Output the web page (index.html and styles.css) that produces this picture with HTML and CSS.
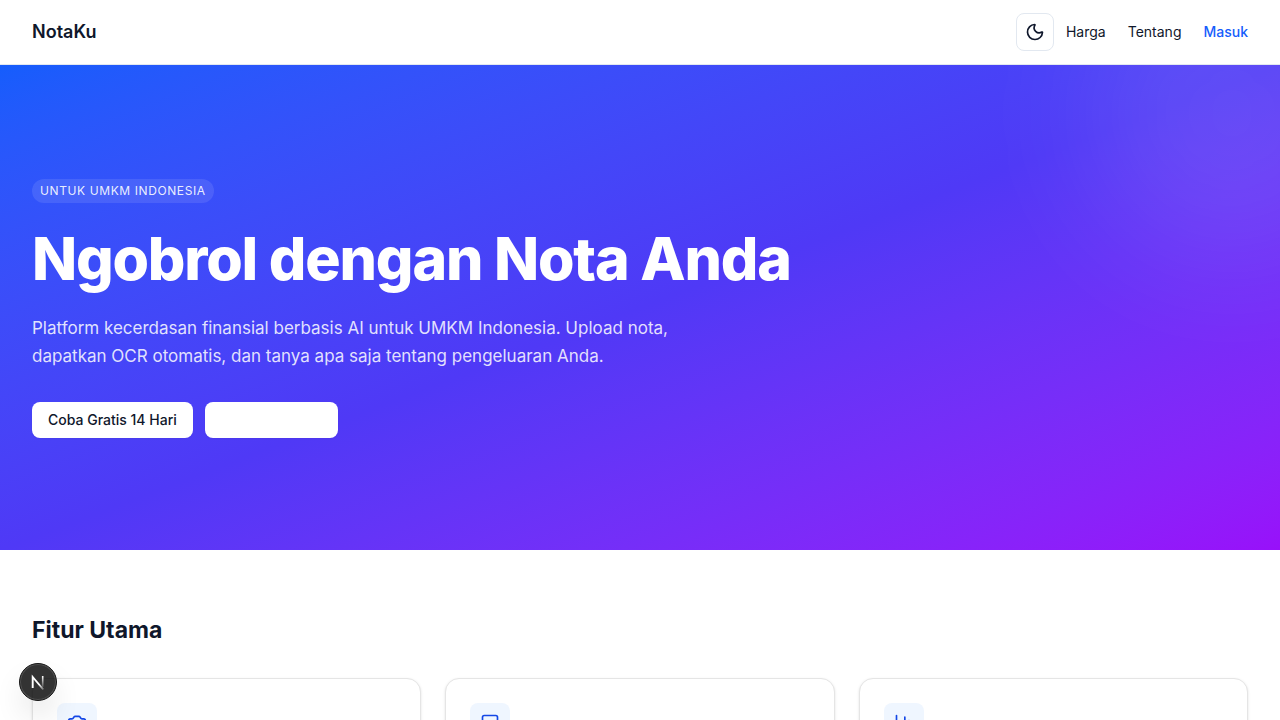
FILE: index.html
```html
<!DOCTYPE html>
<html lang="id">
<head>
  <meta charset="utf-8">
  <meta name="viewport" content="width=device-width, initial-scale=1">
  <title>NotaKu</title>
  <link rel="stylesheet" href="styles.css">
</head>
<body>
  <header class="site-header">
    <a class="brand" href="#">NotaKu</a>
    <div class="header-actions">
      <button class="theme-toggle" type="button" aria-label="Ganti tema">
        <svg class="icon" viewBox="0 0 24 24" aria-hidden="true"><path d="M20.985 12.486a9 9 0 1 1-9.473-9.472c.405-.022.617.46.402.803a6 6 0 0 0 8.268 8.268c.344-.215.825-.004.803.401"/></svg>
      </button>
      <nav class="site-nav">
        <a href="#">Harga</a>
        <a href="#">Tentang</a>
        <a class="login" href="#">Masuk</a>
      </nav>
    </div>
  </header>

  <main>
    <section class="hero">
      <div class="hero-glow"></div>
      <span class="badge">Untuk UMKM Indonesia</span>
      <h1>Ngobrol dengan Nota Anda</h1>
      <p class="lead">Platform kecerdasan finansial berbasis AI untuk UMKM Indonesia. Upload nota, dapatkan OCR otomatis, dan tanya apa saja tentang pengeluaran Anda.</p>
      <div class="hero-actions">
        <a class="button" href="#">Coba Gratis 14 Hari</a>
        <a class="button button-blank" href="#" aria-label="Harga"></a>
      </div>
    </section>

    <section class="features">
      <h2>Fitur Utama</h2>
      <div class="cards">
        <article class="card">
          <div class="card-icon">
            <svg class="icon" viewBox="0 0 24 24" aria-hidden="true"><path d="M13.997 4a2 2 0 0 1 1.760 1.050l.486.900A2 2 0 0 0 18.003 7H20a2 2 0 0 1 2 2v9a2 2 0 0 1-2 2H4a2 2 0 0 1-2-2V9a2 2 0 0 1 2-2h1.997a2 2 0 0 0 1.759-1.048l.489-.904A2 2 0 0 1 10.004 4z"/><circle cx="12" cy="13" r="3"/></svg>
          </div>
        </article>
        <article class="card">
          <div class="card-icon">
            <svg class="icon" viewBox="0 0 24 24" aria-hidden="true"><path d="M21 15a2 2 0 0 1-2 2H7l-4 4V5a2 2 0 0 1 2-2h14a2 2 0 0 1 2 2z"/></svg>
          </div>
        </article>
        <article class="card">
          <div class="card-icon">
            <svg class="icon" viewBox="0 0 24 24" aria-hidden="true"><path d="M3 3v16a2 2 0 0 0 2 2h16M18 17V9M13 17V5M8 17v-3"/></svg>
          </div>
        </article>
      </div>
    </section>
  </main>

  <button class="dev-badge" type="button" aria-label="Next.js">
    <svg viewBox="0 0 36 36" aria-hidden="true">
      <defs>
        <linearGradient id="stem" x1="0" y1="12" x2="0" y2="25" gradientUnits="userSpaceOnUse"><stop stop-color="#fff"/><stop offset="1" stop-color="#fff" stop-opacity="0"/></linearGradient>
        <linearGradient id="slash" x1="20" y1="20" x2="24" y2="26" gradientUnits="userSpaceOnUse"><stop stop-color="#fff"/><stop offset="1" stop-color="#fff" stop-opacity="0.200"/></linearGradient>
      </defs>
      <path d="M12.700 24V13L23.300 25.500" fill="none" stroke="url(#slash)" stroke-width="1.900"/>
      <path d="M22.700 12v11" fill="none" stroke="url(#stem)" stroke-width="1.600"/>
    </svg>
  </button>
</body>
</html>
```
FILE: styles.css
```css
* {
  box-sizing: border-box;
}

body {
  margin: 0;
  background: #fff;
  color: #0f172b;
  font-family: Inter, "Liberation Sans", sans-serif;
  font-size: 16px;
  line-height: 24px;
  -webkit-font-smoothing: antialiased;
}

a {
  color: inherit;
  text-decoration: none;
}

h1,
h2,
p {
  margin: 0;
}

.icon {
  display: block;
  width: 20px;
  height: 20px;
  fill: none;
  stroke: currentColor;
  stroke-width: 2;
  stroke-linecap: round;
  stroke-linejoin: round;
}

.site-header {
  display: flex;
  align-items: center;
  justify-content: space-between;
  height: 65px;
  padding: 0 32px;
  border-bottom: 1px solid #e2e8f0;
}

.brand {
  font-size: 18px;
  line-height: 28px;
  font-weight: 600;
}

.header-actions {
  display: flex;
  align-items: center;
  gap: 12px;
}

.theme-toggle {
  display: grid;
  place-items: center;
  width: 38px;
  height: 38px;
  padding: 0;
  border: 1px solid #e2e8f0;
  border-radius: 8px;
  background: #fff;
  color: inherit;
}

.site-nav {
  display: flex;
  gap: 22px;
  font-size: 14px;
  line-height: 20px;
}

.login {
  color: #155dfc;
  font-weight: 500;
}

.hero {
  position: relative;
  overflow: hidden;
  padding: 114px 32px 112px;
  background: linear-gradient(to bottom right in oklab, #155dfc, #4f39f6, #9810fa);
  color: #fff;
}

.hero-glow {
  position: absolute;
  top: -96px;
  right: -96px;
  width: 288px;
  height: 288px;
  border-radius: 50%;
  background: rgb(255 255 255 / 10%);
  filter: blur(64px);
}

.badge {
  display: block;
  width: fit-content;
  padding: 4px 8px;
  border-radius: 12px;
  background: rgb(255 255 255 / 10%);
  color: rgb(255 255 255 / 90%);
  font-size: 12px;
  line-height: 16px;
  letter-spacing: 0.05em;
  text-transform: uppercase;
}

h1 {
  margin-top: 24px;
  font-size: 59px;
  line-height: 63px;
  font-weight: 800;
  letter-spacing: -0.02em;
}

.lead {
  max-width: 672px;
  margin-top: 24px;
  color: rgb(255 255 255 / 85%);
  font-size: 17px;
  line-height: 28px;
}

.hero-actions {
  display: flex;
  gap: 12px;
  margin-top: 32px;
}

.button {
  height: 36px;
  padding: 8px 16px;
  border-radius: 8px;
  background: #fff;
  box-shadow: 0 1px 2px rgb(0 0 0 / 5%);
  color: #0f172b;
  font-size: 14px;
  line-height: 20px;
  font-weight: 500;
}

.button-blank {
  width: 133px;
}

.features {
  padding: 64px 32px;
}

h2 {
  font-size: 23px;
  line-height: 32px;
  font-weight: 700;
}

.cards {
  display: grid;
  grid-template-columns: repeat(3, 1fr);
  gap: 24px;
  margin-top: 32px;
}

.card {
  min-height: 180px;
  padding: 24px;
  border: 1px solid #e5e5e5;
  border-radius: 14px;
  background: #fff;
  box-shadow: 0 1px 3px rgb(0 0 0 / 10%), 0 1px 2px -1px rgb(0 0 0 / 10%);
}

.card-icon {
  display: grid;
  place-items: center;
  width: 40px;
  height: 40px;
  border-radius: 8px;
  background: #eff6ff;
  color: #1447e6;
}

.dev-badge {
  position: fixed;
  left: 19px;
  bottom: 19px;
  width: 38px;
  height: 38px;
  padding: 0;
  border: 1px solid #171717;
  border-radius: 50%;
  background: rgb(0 0 0 / 80%);
  box-shadow: inset 0 0 0 1px rgb(255 255 255 / 14%), 0 16px 32px -8px rgb(0 0 0 / 24%);
}

.dev-badge svg {
  display: block;
  width: 36px;
  height: 36px;
}
```
